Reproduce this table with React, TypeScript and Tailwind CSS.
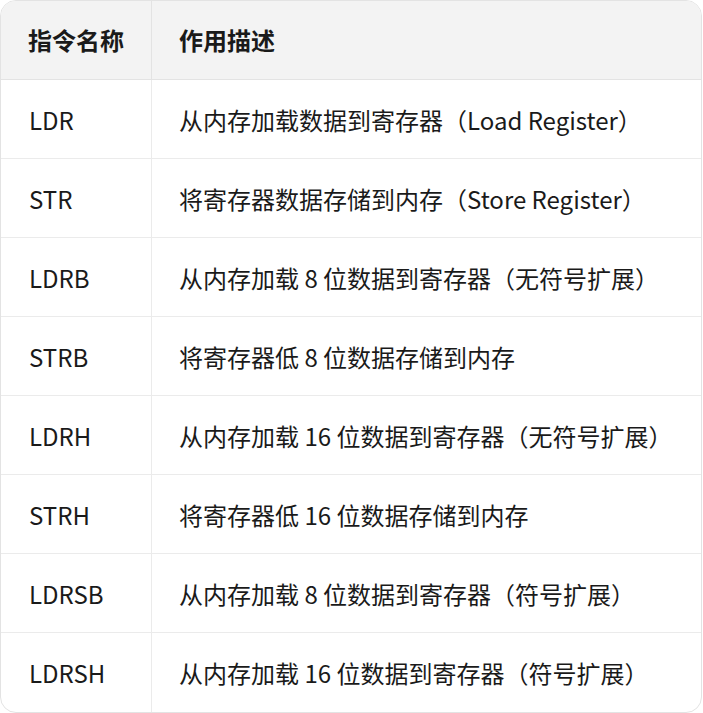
const rows: [string, string][] = [
  ["LDR", "从内存加载数据到寄存器（Load Register）"],
  ["STR", "将寄存器数据存储到内存（Store Register）"],
  ["LDRB", "从内存加载 8 位数据到寄存器（无符号扩展）"],
  ["STRB", "将寄存器低 8 位数据存储到内存"],
  ["LDRH", "从内存加载 16 位数据到寄存器（无符号扩展）"],
  ["STRH", "将寄存器低 16 位数据存储到内存"],
  ["LDRSB", "从内存加载 8 位数据到寄存器（符号扩展）"],
  ["LDRSH", "从内存加载 16 位数据到寄存器（符号扩展）"],
];

export default function App() {
  return (
    <div
      className="w-[702px] bg-white text-[24px] text-[#1a1a1a]"
      style={{ fontFamily: '"Noto Sans CJK SC", sans-serif' }}
    >
      <div className="overflow-hidden rounded-[16px] border border-[#e3e3e3]">
        <div className="flex h-[79px] border-b border-[#e3e3e3] bg-[#f3f3f3] font-bold">
          <div className="flex w-[151px] shrink-0 items-center border-r border-[#e3e3e3] pl-[27px]">
            指令名称
          </div>
          <div className="flex flex-1 items-center pl-[27px]">作用描述</div>
        </div>
        {rows.map(([a, b], i) => (
          <div
            key={a}
            className={
              "flex h-[79px] " + (i < rows.length - 1 ? "border-b border-[#ebebeb]" : "")
            }
          >
            <div className="flex w-[151px] shrink-0 items-center border-r border-[#ebebeb] pl-[28px] pt-[1px]">
              {a}
            </div>
            <div className="flex flex-1 items-center pl-[27px] pt-[1px]">{b}</div>
          </div>
        ))}
      </div>
    </div>
  );
}
